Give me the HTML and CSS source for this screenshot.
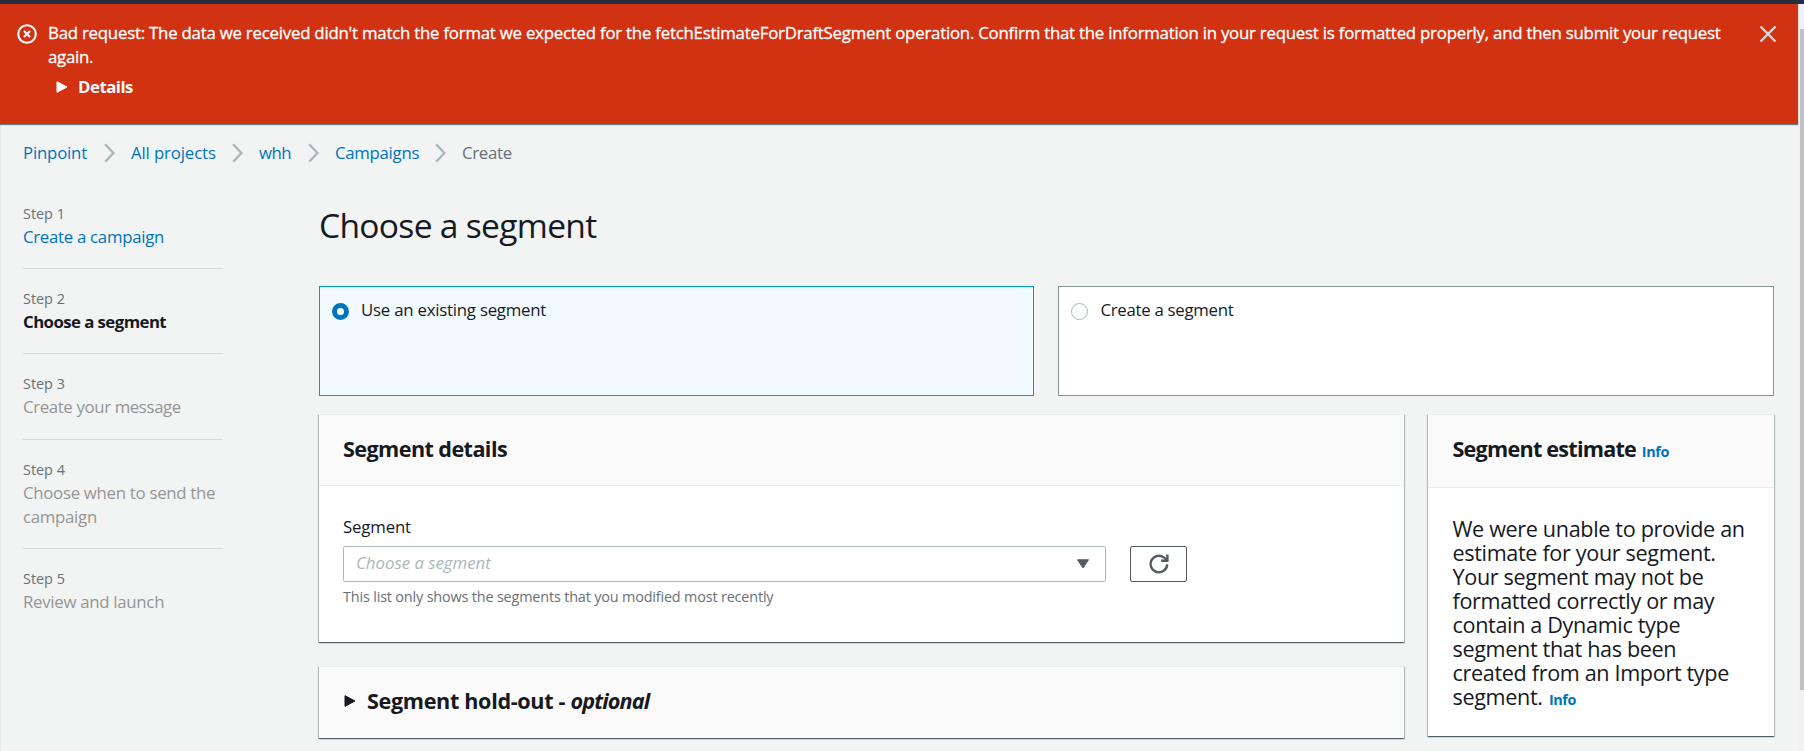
FILE: index.html
```
<!DOCTYPE html>
<html lang="en">
<head>
<meta charset="utf-8">
<title>Choose a segment</title>
<link rel="stylesheet" href="styles.css">
</head>
<body>
<div class="topbar"></div>
<div class="viewport">
  <div class="content">
    <div class="alert">
      <svg class="alert-icon" viewBox="0 0 20 20"><circle cx="10" cy="10" r="8.8"/><path d="M7 7l6 6M13 7l-6 6"/></svg>
      <div class="alert-body">
        <div class="alert-text"><span class="line-long">Bad request: The data we received didn't match the format we expected for the fetchEstimateForDraftSegment operation. Confirm that the information in your request is formatted properly, and then submit your request</span> again.</div>
        <div class="details"><svg class="tri" viewBox="0 0 12 14"><path d="M1 1.7v10.6L11 7z"/></svg><span>Details</span></div>
      </div>
      <svg class="close" viewBox="0 0 18 18"><path d="M1.5 1.5l15 15M16.5 1.5l-15 15"/></svg>
    </div>
    <div class="page">
      <nav class="crumbs">
        <a class="c1">Pinpoint</a><svg viewBox="0 0 11 20"><path d="M1.2 1.2L9.4 10l-8.2 8.8"/></svg>
        <a class="c2">All projects</a><svg viewBox="0 0 11 20"><path d="M1.2 1.2L9.4 10l-8.2 8.8"/></svg>
        <a class="c3">whh</a><svg viewBox="0 0 11 20"><path d="M1.2 1.2L9.4 10l-8.2 8.8"/></svg>
        <a class="c4">Campaigns</a><svg viewBox="0 0 11 20"><path d="M1.2 1.2L9.4 10l-8.2 8.8"/></svg>
        <span>Create</span>
      </nav>
      <div class="columns">
        <aside class="steps">
          <div class="step"><small>Step 1</small><a>Create a campaign</a></div>
          <div class="step"><small>Step 2</small><b>Choose a segment</b></div>
          <div class="step step-tall"><small>Step 3</small><span class="tight">Create your message</span></div>
          <div class="step"><small>Step 4</small><span>Choose when to send the campaign</span></div>
          <div class="step"><small>Step 5</small><span>Review and launch</span></div>
        </aside>
        <main>
          <h1>Choose a segment</h1>
          <div class="tiles">
            <div class="tile selected"><i class="radio"></i><span>Use an existing segment</span></div>
            <div class="tile"><i class="radio"></i><span>Create a segment</span></div>
          </div>
          <div class="panels">
            <div class="left">
              <section class="panel">
                <h2>Segment details</h2>
                <div class="form">
                  <label>Segment</label>
                  <div class="row">
                    <div class="select"><em>Choose a segment</em><svg viewBox="0 0 14 10"><path d="M1.5 0.8h11L7 9z"/></svg></div>
                    <div class="button"><svg viewBox="0 0 22 22"><path d="M19.2 11.4A8.3 8.3 0 1 1 16.6 5l1.8 1.8"/><path d="M19.4 1.6v6.2h-6.2"/></svg></div>
                  </div>
                  <div class="hint">This list only shows the segments that you modified most recently</div>
                </div>
              </section>
              <section class="panel holdout"><svg class="tri" viewBox="0 0 12 14"><path d="M1 1.7v10.6L11 7z"/></svg><h3>Segment hold-out - <em>optional</em></h3></section>
            </div>
            <section class="panel estimate">
              <h2><span>Segment estimate</span> <a>Info</a></h2>
              <p>We were unable to provide an<br>estimate for your segment.<br>Your segment may not be<br>formatted correctly or may<br>contain a Dynamic type<br>segment that has been<br>created from an Import type<br>segment. <a>Info</a></p>
            </section>
          </div>
        </main>
      </div>
    </div>
  </div>
  <div class="scrollbar"><div class="thumb"></div></div>
</div>
</body>
</html>
```
FILE: styles.css
```
* { box-sizing: border-box; }
body { margin: 0; height: 751px; overflow: hidden; background: #f2f3f3; color: #16191f; font: 16.8px/24px "Open Sans", "Noto Sans", sans-serif; letter-spacing: -0.28px; }
svg { display: block; flex: none; fill: none; }
a { color: #0073bb; }
h1, h2, h3, p { margin: 0; }
.topbar { height: 4px; background: #232f3e; }
.viewport { display: flex; height: 747px; }
.content { width: 1798px; }

.alert { position: relative; display: flex; height: 120px; padding: 17px 21px 0 16.5px; background: #d13212; color: #fff; box-shadow: 0 1px 1px #687f88; }
.alert-icon { width: 20px; height: 20px; margin: 3px 11.5px 0 0; stroke: #fff; stroke-width: 2.1; }
.alert-body { flex: 1; }
.alert-text { width: 1690px; font-weight: 500; letter-spacing: -0.25px; -webkit-text-stroke: 0.3px #fff; }
.line-long { letter-spacing: -0.212px; }
.details { display: flex; align-items: center; gap: 10px; margin: 6px 0 0 8px; font-weight: 700; letter-spacing: -0.48px; }
.tri { width: 12px; height: 14px; fill: currentColor; stroke: currentColor; stroke-width: 1; stroke-linejoin: round; }
.close { width: 18px; height: 18px; margin-top: 4px; stroke: #d5dbdb; stroke-width: 2.4; }

.page { height: 627px; padding: 17px 24px 0 22px; border-left: 1px solid #e6e9e9; }
.crumbs { display: flex; align-items: center; height: 24px; color: #687078; white-space: nowrap; }
.crumbs svg { width: 11px; height: 20px; margin: 0 16px; stroke: #aab7b8; stroke-width: 2.4; }
.crumbs a { flex: none; }
.c1 { width: 65px; letter-spacing: -0.19px; }
.c2 { width: 85px; letter-spacing: -0.13px; }
.c3 { width: 33px; letter-spacing: -0.5px; }
.c4 { width: 84px; }
.columns { display: flex; }
.steps { width: 200px; margin-right: 96px; padding-top: 36px; color: #959595; }
.step { padding: 2px 0 19px; margin-bottom: 17px; border-bottom: 1px solid #d5dbdb; line-height: 24px; }
.step-tall { padding-bottom: 20px; }
.step:last-child { border: 0; }
.step > * { display: block; }
.step small { font-size: 14.4px; line-height: 22px; letter-spacing: 0; color: #687078; }
.step b { color: #16191f; letter-spacing: -0.56px; }
.step .tight { letter-spacing: -0.36px; }

main { flex: 1; }
h1 { height: 121px; padding-top: 39px; font-size: 33.6px; line-height: 42px; font-weight: 400; letter-spacing: -0.7px; }
.tiles { display: grid; grid-template-columns: 715px 716px; gap: 24px; }
.tile { display: flex; height: 110px; padding: 11px 12px; gap: 12.5px; border: 1px solid #879596; background: #fff; }
.tile.selected { padding-left: 11.5px; border-color: #00a1c9; background: #f1faff; letter-spacing: -0.22px; }
.radio { flex: none; width: 17px; height: 17px; margin-top: 5px; border: 1.5px solid #aab7b8; border-radius: 50%; background: #fff; }
.selected .radio { border: 5px solid #0073bb; }
.panels { display: flex; align-items: flex-start; gap: 24px; margin-top: 18px; }
.left { width: 1085px; }
.panel { background: #fff; box-shadow: 0 1px 1px 0 rgba(0, 28, 36, 0.5), 1px 1px 1px 0 rgba(0, 28, 36, 0.2), -1px 1px 1px 0 rgba(0, 28, 36, 0.2); border-top: 1px solid #eaeded; }
.panel h2 { height: 71px; padding: 20px 24px; border-bottom: 1px solid #eaeded; background: #fafafa; font-size: 21.6px; line-height: 28px; font-weight: 700; letter-spacing: -0.58px; }
.form { height: 156px; padding: 29px 24px 0; }
.form label { display: block; letter-spacing: -0.15px; }
.row { display: flex; gap: 24px; margin-top: 7px; }
.select { display: flex; align-items: center; justify-content: space-between; width: 763px; height: 36px; padding: 0 15px 0 12px; border: 1px solid #aab7b8; border-radius: 2px; color: #aab7b8; letter-spacing: 0; }
.select em { padding-bottom: 2px; }
.select svg { width: 14px; height: 10px; fill: #545b64; stroke: #545b64; stroke-linejoin: round; }
.button { display: flex; align-items: center; justify-content: center; width: 57px; height: 36px; border: 1px solid #545b64; border-radius: 2px; }
.button svg { width: 22px; height: 22px; stroke: #545b64; stroke-width: 2.4; }
.hint { margin-top: 3px; font-size: 14.4px; color: #687078; letter-spacing: -0.16px; }
.holdout { display: flex; align-items: center; gap: 11px; height: 72px; margin-top: 24px; padding: 0 24px 3px 25px; background: #fafafa; }
.holdout h3 { font-size: 21.6px; line-height: 28px; letter-spacing: -0.34px; }
.holdout em { letter-spacing: -0.84px; }
.estimate { width: 346px; height: 322px; }
.panel.estimate h2 { height: 73px; padding-left: 24.5px; letter-spacing: -0.77px; }
.estimate a { font-size: 14.4px; font-weight: 700; letter-spacing: -0.4px; margin-left: 1px; }
.estimate p { padding: 29px 0 0 24.5px; font-size: 21.6px; letter-spacing: -0.34px; }

.scrollbar { width: 6px; padding: 25px 0 0 2px; background: #f1f1f1; }
.thumb { height: 661px; background: #c1c1c1; }
```
